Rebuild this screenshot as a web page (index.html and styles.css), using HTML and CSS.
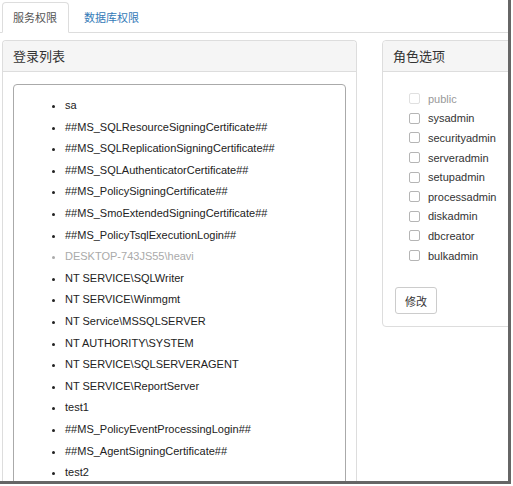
FILE: index.html
```html
<!DOCTYPE html>
<html lang="zh-CN">
<head>
    <meta charset="UTF-8">
    <title>权限管理</title>
    <link rel="stylesheet" href="styles.css">
</head>
<body>
    <div class="window">
        <div class="tabs">
            <div class="tab active">服务权限</div>
            <div class="tab link">数据库权限</div>
        </div>

        <div class="panels">
            <div class="panel logins">
                <div class="panel-heading">登录列表</div>
                <div class="panel-body">
                    <div class="list-box">
                        <ul>
                            <li>sa</li>
                            <li>##MS_SQLResourceSigningCertificate##</li>
                            <li>##MS_SQLReplicationSigningCertificate##</li>
                            <li>##MS_SQLAuthenticatorCertificate##</li>
                            <li>##MS_PolicySigningCertificate##</li>
                            <li>##MS_SmoExtendedSigningCertificate##</li>
                            <li>##MS_PolicyTsqlExecutionLogin##</li>
                            <li class="muted">DESKTOP-743JS55\heavi</li>
                            <li>NT SERVICE\SQLWriter</li>
                            <li>NT SERVICE\Winmgmt</li>
                            <li>NT Service\MSSQLSERVER</li>
                            <li>NT AUTHORITY\SYSTEM</li>
                            <li>NT SERVICE\SQLSERVERAGENT</li>
                            <li>NT SERVICE\ReportServer</li>
                            <li>test1</li>
                            <li>##MS_PolicyEventProcessingLogin##</li>
                            <li>##MS_AgentSigningCertificate##</li>
                            <li>test2</li>
                        </ul>
                    </div>
                </div>
            </div>

            <div class="panel roles">
                <div class="panel-heading">角色选项</div>
                <div class="panel-body">
                    <label class="role disabled"><input type="checkbox" disabled> public</label>
                    <label class="role"><input type="checkbox"> sysadmin</label>
                    <label class="role"><input type="checkbox"> securityadmin</label>
                    <label class="role"><input type="checkbox"> serveradmin</label>
                    <label class="role"><input type="checkbox"> setupadmin</label>
                    <label class="role"><input type="checkbox"> processadmin</label>
                    <label class="role"><input type="checkbox"> diskadmin</label>
                    <label class="role"><input type="checkbox"> dbcreator</label>
                    <label class="role"><input type="checkbox"> bulkadmin</label>
                    <button class="btn">修改</button>
                </div>
            </div>
        </div>
    </div>
</body>
</html>
```

FILE: styles.css
```css
body {
    margin: 0;
    background: #fff;
    font-family: "Liberation Sans", Arial, "Noto Sans CJK SC", sans-serif;
    color: #333;
}
.window {
    width: 508px;
    height: 481px;
    overflow: hidden;
    border-right: 3px solid #666;
    border-bottom: 3px solid #666;
    background: #fff;
}
.tabs {
    display: flex;
    gap: 4px;
    padding: 2px 0 0 2px;
    border-bottom: 1px solid #ddd;
}
.tab {
    height: 29px;
    line-height: 29px;
    padding: 0 11px 0 10px;
    margin-bottom: -1px;
    border: 1px solid transparent;
    border-radius: 4px 4px 0 0;
    font-family: "Noto Sans CJK SC", sans-serif;
    font-size: 11px;
}
.tab.active {
    border-color: #ddd;
    border-bottom-color: #fff;
    background: #fff;
    color: #555;
}
.tab.link {
    color: #337ab7;
}
.panels {
    display: flex;
    gap: 25px;
    padding: 7px 0 0 2px;
}
.panel {
    flex-shrink: 0;
    border: 1px solid #ddd;
    border-radius: 4px;
    background: #fff;
    align-self: flex-start;
}
.logins {
    width: 353px;
    border-bottom: none;
}
.roles {
    width: 160px;
}
.panel-heading {
    height: 30px;
    line-height: 30px;
    padding: 0 10px;
    background: #f5f5f5;
    border-bottom: 1px solid #ddd;
    border-radius: 4px 4px 0 0;
    font-family: "Noto Sans CJK SC", sans-serif;
    font-size: 13px;
    color: #333;
}
.logins .panel-body {
    padding: 12px 10px 0;
}
.list-box {
    border: 1px solid #aaa;
    border-radius: 4px;
    padding: 10px 0 0 11px;
}
.list-box ul {
    margin: 0;
    padding-left: 40px;
}
.list-box li {
    font-size: 11px;
    line-height: 21.6px;
    color: #222;
}
.list-box li.muted {
    color: #aaa;
}
.roles .panel-body {
    padding: 17px 10px 12px 12px;
}
.role {
    display: flex;
    align-items: center;
    gap: 4px;
    height: 19.6px;
    padding-left: 14px;
    font-size: 11px;
    color: #333;
}
.role input {
    appearance: none;
    width: 11px;
    height: 11px;
    margin: 0 4px 0 0;
    border: 1px solid #b5b5b5;
    border-radius: 2px;
    background: #fff;
}
.role.disabled {
    color: #999;
}
.role.disabled input {
    border-color: #e0e0e0;
}
.btn {
    display: block;
    margin-top: 22px;
    width: 42px;
    height: 27px;
    padding: 0;
    border: 1px solid #ccc;
    border-radius: 3px;
    background: #fff;
    font-family: "Noto Sans CJK SC", sans-serif;
    font-size: 11px;
    color: #333;
}
```
